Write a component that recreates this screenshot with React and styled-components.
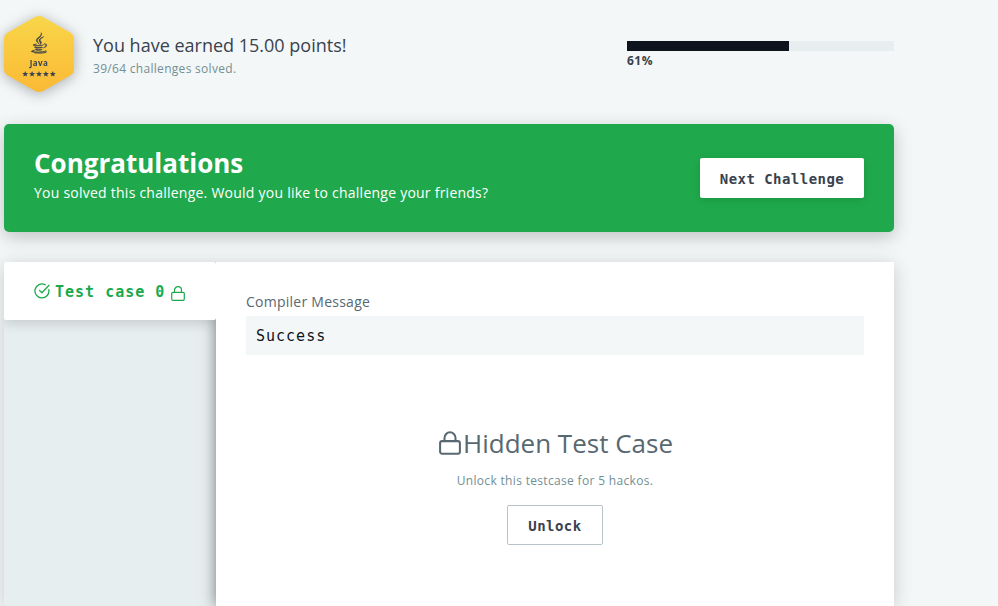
import React from "react";
import styled, { createGlobalStyle } from "styled-components";
import { FaJava } from "react-icons/fa";

const GlobalStyle = createGlobalStyle`
  * { box-sizing: border-box; }
  body {
    margin: 0;
    background: #f3f7f7;
    font-family: "Open Sans", sans-serif;
    overflow: hidden;
  }
  h1, h2, p { margin: 0; font-weight: 400; }
`;

const mono = `"DejaVu Sans Mono", "Liberation Mono", monospace`;

const Page = styled.main`
  width: 894px;
  height: 606px;
  padding-left: 4px;
  display: flex;
  flex-direction: column;
`;

const Header = styled.header`
  height: 124px;
  flex: none;
  display: flex;
  align-items: flex-start;
`;

const BadgeArt = styled.svg`
  display: block;
  flex: none;
  margin-top: 14px;
  overflow: visible;
  filter: drop-shadow(0 2px 7px rgba(0, 0, 0, 0.3));
`;

const Earned = styled.div`
  margin: 32px 0 0 19px;
  white-space: nowrap;
`;

const Points = styled.h1`
  font-size: 18px;
  line-height: 27px;
  color: #39424e;
`;

const Solved = styled.p`
  font-size: 12px;
  line-height: 20px;
  letter-spacing: 0.3px;
  color: #738f93;
`;

const Progress = styled.div`
  width: 267px;
  margin: 41px 0 0 auto;
`;

const Track = styled.div`
  height: 10px;
  background: #e7eeef;
`;

const Fill = styled.div`
  width: 162px;
  height: 100%;
  background: #0e141e;
`;

const Percent = styled.div`
  font-size: 12px;
  font-weight: 700;
  line-height: 20px;
  letter-spacing: 0.5px;
  color: #39424e;
`;

const Banner = styled.section`
  height: 108px;
  flex: none;
  padding: 0 30px;
  display: flex;
  align-items: center;
  justify-content: space-between;
  border-radius: 5px;
  background: #1fa94c;
  color: #fff;
  box-shadow: 0 5px 18px rgba(0, 0, 0, 0.22);
`;

const BannerCopy = styled.div`
  white-space: nowrap;
  padding-bottom: 4px;
`;

const BannerTitle = styled.h2`
  font-size: 26px;
  font-weight: 700;
  line-height: 33px;
`;

const BannerText = styled.p`
  font-size: 14px;
  line-height: 26px;
  letter-spacing: 0.24px;
`;

const Button = styled.button`
  width: ${({ $width }) => $width}px;
  height: 40px;
  padding: 2px 0 0;
  flex: none;
  border: ${({ $outlined }) => ($outlined ? "1px solid #b7c3c6" : "0")};
  border-radius: 2px;
  background: #fff;
  box-shadow: ${({ $outlined }) => ($outlined ? "none" : "0 2px 8px rgba(0, 0, 0, 0.12)")};
  color: #39424e;
  font: 700 14px ${mono};
  letter-spacing: 0.45px;
`;

const Results = styled.section`
  flex: 1;
  margin-top: 30px;
  display: flex;
  box-shadow: 0 3px 18px rgba(0, 0, 0, 0.18);
`;

const Sidebar = styled.nav`
  width: 212px;
  flex: none;
  background: #e7eeef;
`;

const CaseTab = styled.div`
  position: relative;
  z-index: 1;
  height: 58px;
  padding-left: 30px;
  display: flex;
  align-items: center;
  border-radius: 2px;
  background: #fff;
  color: #1ba94c;
  box-shadow: 0 2px 14px rgba(0, 0, 0, 0.18);
  clip-path: inset(0 0 -20px 0);
`;

const CaseName = styled.span`
  margin: 2px 6px 0 5px;
  font: 700 15px/20px ${mono};
  letter-spacing: 1px;
  white-space: nowrap;
`;

const Detail = styled.div`
  flex: 1;
  padding: 28px 30px 0;
  background: #fff;
  box-shadow: 0 0 14px rgba(0, 0, 0, 0.5);
  clip-path: inset(0 0 0 -20px);
`;

const Label = styled.p`
  font-size: 14px;
  line-height: 24px;
  letter-spacing: 0.25px;
  color: #576871;
`;

const Output = styled.div`
  height: 39px;
  margin-top: 2px;
  padding-left: 10px;
  background: #f3f7f7;
  color: #0e141e;
  font: 15px/41px ${mono};
  letter-spacing: 1px;
`;

const Hidden = styled.div`
  margin-top: 68px;
  display: flex;
  flex-direction: column;
  align-items: center;
`;

const HiddenTitle = styled.h2`
  display: flex;
  align-items: center;
  gap: 2px;
  padding-left: 2px;
  font-size: 26px;
  line-height: 40px;
  color: #576871;
  white-space: nowrap;
`;

const HiddenText = styled.p`
  margin: 8px 0 14px;
  font-size: 12px;
  line-height: 20px;
  letter-spacing: 0.33px;
  color: #738f93;
`;

const IconArt = styled.svg`
  display: block;
  flex: none;
  fill: none;
  stroke: currentColor;
  stroke-linecap: round;
  stroke-linejoin: round;
`;

const SmallLock = styled.span`
  margin-top: 4px;
`;

const CheckIcon = () => (
  <IconArt width="16" height="16" viewBox="0 0 16 16" strokeWidth="1.3">
    <path d="M14.8 6.6A7 7 0 1 1 11.1 1.7" />
    <path d="m5.5 7.4 2.4 2.4L15 2.2" />
  </IconArt>
);

const LockIcon = ({ width, height, weight }) => (
  <IconArt width={width} height={height} viewBox="0 0 14 15" strokeWidth={weight}>
    <rect x=".7" y="6.3" width="12.6" height="8" rx="1.3" />
    <path d="M3.5 6.3V4.2a3.5 3.5 0 0 1 7 0v2.1" />
  </IconArt>
);

const STAR = "M0-3 .8-1 3-.9 1.3.5 1.9 2.6 0 1.4-1.9 2.6-1.3.5-3-.9-.8-1Z";

const BadgeLabel = styled.text`
  font: 700 8px "Open Sans", sans-serif;
  letter-spacing: 0.4px;
  text-anchor: middle;
  fill: #39424e;
`;

const JavaBadge = () => (
  <BadgeArt width="70" height="80" viewBox="0 0 70 80">
    <defs>
      <linearGradient id="gold" x1="0" y1="0" x2="0" y2="1">
        <stop offset="0" stopColor="#f9d649" />
        <stop offset="1" stopColor="#fbb935" />
      </linearGradient>
    </defs>
    <path
      fill="url(#gold)"
      d="M31 3Q35 1 39 3L67 19Q70 21 70 25V55Q70 59 67 61L39 77Q35 79 31 77L3 61Q0 59 0 55V25Q0 21 3 19L31 3Z"
    />
    <FaJava x="24.5" y="18.5" size={21} color="#39424e" stroke="#39424e" strokeWidth="12" />
    <BadgeLabel x="35" y="52">Java</BadgeLabel>
    {[21.2, 28.1, 35, 41.9, 48.8].map((x) => (
      <path key={x} d={STAR} transform={`translate(${x} 60)`} fill="#39424e" />
    ))}
  </BadgeArt>
);

export default function App() {
  return (
    <>
      <GlobalStyle />
      <Page>
        <Header>
          <JavaBadge />
          <Earned>
            <Points>You have earned 15.00 points!</Points>
            <Solved>39/64 challenges solved.</Solved>
          </Earned>
          <Progress>
            <Track><Fill /></Track>
            <Percent>61%</Percent>
          </Progress>
        </Header>
        <Banner>
          <BannerCopy>
            <BannerTitle>Congratulations</BannerTitle>
            <BannerText>You solved this challenge. Would you like to challenge your friends?</BannerText>
          </BannerCopy>
          <Button $width={164}>Next Challenge</Button>
        </Banner>
        <Results>
          <Sidebar>
            <CaseTab>
              <CheckIcon />
              <CaseName>Test case 0</CaseName>
              <SmallLock><LockIcon width={14} height={15} weight={1.2} /></SmallLock>
            </CaseTab>
          </Sidebar>
          <Detail>
            <Label>Compiler Message</Label>
            <Output>Success</Output>
            <Hidden>
              <HiddenTitle>
                <LockIcon width={22} height={24} weight={1.3} />
                Hidden Test Case
              </HiddenTitle>
              <HiddenText>Unlock this testcase for 5 hackos.</HiddenText>
              <Button $width={96} $outlined>Unlock</Button>
            </Hidden>
          </Detail>
        </Results>
      </Page>
    </>
  );
}
